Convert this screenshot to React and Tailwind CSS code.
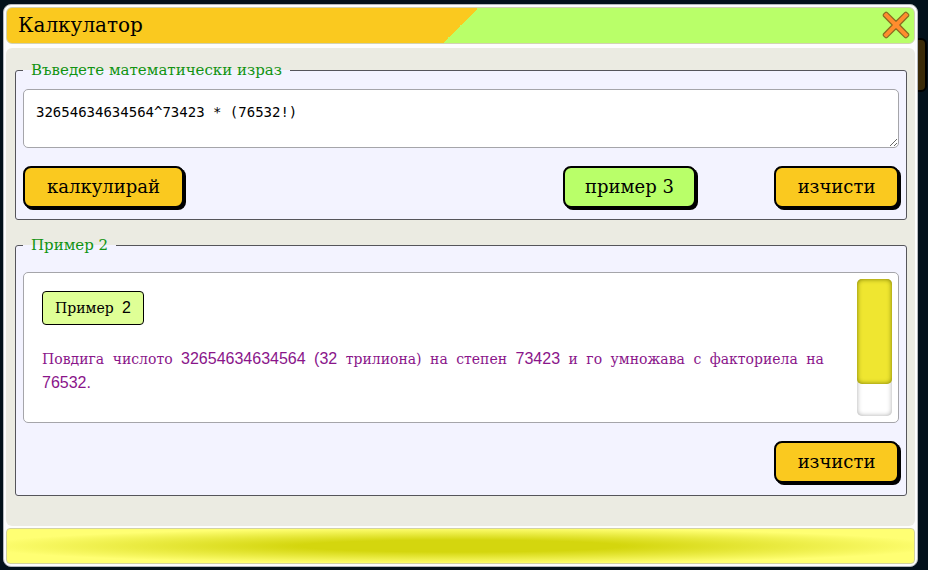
const serif = "font-['DejaVu_Serif','Liberation_Serif',serif]";
const sans = "font-['Liberation_Sans',sans-serif]";

function ActionButton({ children, tone = "bg-[#fac91f]", className = "" }) {
  return (
    <button
      type="button"
      className={`${serif} h-[42px] rounded-lg border-2 border-black text-[18px] leading-6 text-black shadow-[2px_2px_0_#000] ${tone} ${className}`}
    >
      {children}
    </button>
  );
}

function Panel({ title, className = "", children }) {
  return (
    <fieldset
      className={`min-w-0 rounded-[3px] border border-[#55555a] bg-[#f3f3ff] px-[7px] ${className}`}
    >
      <legend className={`${serif} px-2 text-[15px] leading-[22px] text-[#119311]`}>{title}</legend>
      {children}
    </fieldset>
  );
}

function CloseIcon() {
  return (
    <svg viewBox="0 0 28 28" className="size-7" aria-hidden="true">
      <path
        d="M5 1.4 14 10.2 23 1.4Q24 .8 24.8 1.6L26.4 3.2Q27.2 4 26.6 5L17.8 14 26.6 23Q27.2 24 26.4 24.8L24.8 26.4Q24 27.2 23 26.6L14 17.8 5 26.6Q4 27.2 3.2 26.4L1.6 24.8Q.8 24 1.4 23L10.2 14 1.4 5Q.8 4 1.6 3.2L3.2 1.6Q4 .8 5 1.4Z"
        fill="#ff8c2e"
        stroke="#8a6a20"
        strokeWidth="1.2"
        strokeLinejoin="round"
      />
    </svg>
  );
}

function Word({ children }) {
  return <span className={`${serif} text-[14px]`}>{children}</span>;
}

export default function App() {
  return (
    <div className="relative flex min-h-screen flex-col overflow-hidden bg-[#03111b] pt-1 pr-[10px] pb-[3px] pl-[3px]">
      <div className="absolute top-[38px] right-[1px] h-[54px] w-6 rounded-md border-2 border-black bg-[#3a2a08]" />
      <main className="relative flex grow flex-col rounded-lg border border-[#b5b8bc] bg-[#fdfdfd] p-[2px]">
        <header className="flex h-[37px] items-center justify-between rounded-md border border-[#d2d2b4] bg-[linear-gradient(135deg,#fac91f_50%,#b9ff69_50%)] pr-1 pb-[2px] pl-[11px]">
          <h1 className={`${serif} text-[20px] leading-7 text-black`}>Калкулатор</h1>
          <button type="button" aria-label="Затвори">
            <CloseIcon />
          </button>
        </header>

        <div className="mt-1 grow rounded-md bg-[#ebebe2] pt-[11px] pr-2 pb-[30px] pl-[9px]">
          <Panel title="Въведете математически израз" className="pb-[11px]">
            <textarea
              aria-label="Математически израз"
              defaultValue="32654634634564^73423 * (76532!)"
              className="mt-2 block h-[59px] w-full resize rounded-[5px] border border-[#a5a5aa] bg-white px-3 py-[11px] font-['DejaVu_Sans_Mono',monospace] text-[14px] leading-[22px] text-black outline-none"
            />
            <div className="mt-[18px] flex items-start">
              <ActionButton className="w-[161px]">калкулирай</ActionButton>
              <ActionButton tone="bg-[#b9ff69]" className="mr-[78px] ml-auto w-[133px]">
                пример 3
              </ActionButton>
              <ActionButton className="w-[125px]">изчисти</ActionButton>
            </div>
          </Panel>

          <Panel title="Пример 2" className="mt-[14px] pb-3">
            <div className="mt-4 flex min-h-[151px] rounded-[5px] border border-[#a5a5aa] bg-white py-[6px] pr-[6px] pl-[18px]">
              <div className={`${sans} grow pt-3 text-[16px]`}>
                <h2 className="w-fit rounded-[4px] border border-black bg-[#dfff96] px-3 py-1 leading-6 text-black">
                  <Word>Пример</Word> <span className="ml-1">2</span>
                </h2>
                <p className="mt-[22px] text-justify leading-6 text-[#8a158a]">
                  <Word>Повдига</Word> <Word>числото</Word> 32654634634564 (32{" "}
                  <Word>трилиона)</Word> <Word>на</Word> <Word>степен</Word> 73423 <Word>и</Word>{" "}
                  <Word>го</Word> <Word>умножава</Word> <Word>с</Word> <Word>факториела</Word>{" "}
                  <Word>на</Word> 76532.
                </p>
              </div>
              <div className="ml-[33px] w-[35px] shrink-0 rounded-[5px] bg-white shadow-[inset_0_0_5px_#aaa]">
                <div className="h-[105px] rounded-[5px] bg-[#efe630] shadow-[inset_0_0_5px_#777700]" />
              </div>
            </div>
            <div className="mt-[18px] flex justify-end">
              <ActionButton className="w-[125px]">изчисти</ActionButton>
            </div>
          </Panel>
        </div>

        <footer className="mt-[2px] h-9 rounded-[4px] border border-[#d2d2a0] bg-[radial-gradient(ellipse,#d4d60e_25%,#ffff73_75%)]" />
      </main>
    </div>
  );
}
